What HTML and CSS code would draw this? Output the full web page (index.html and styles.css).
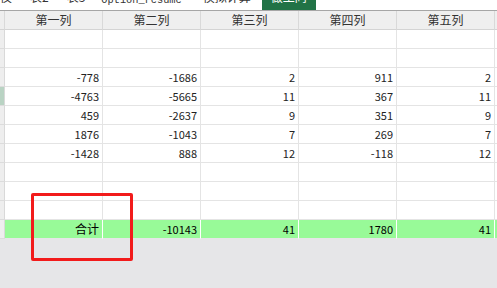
FILE: index.html
```html
<!DOCTYPE html>
<html>
<head>
<meta charset="utf-8">
<link rel="stylesheet" href="styles.css">
</head>
<body>
<div class="page">
  <div class="tabs">
    <div class="tab t1"><span>仪</span></div>
    <div class="tab t2"><span>表2</span></div>
    <div class="tab t3"><span>表3</span></div>
    <div class="tab t4"><span>Option_resume</span></div>
    <div class="tab t5"><span>模拟计算</span></div>
    <div class="tab active"><span>做工同</span></div>
  </div>
  <div class="sheet">
    <div class="row head">
      <div class="rh"></div><div class="c">第一列</div><div class="c">第二列</div><div class="c">第三列</div><div class="c">第四列</div><div class="c">第五列</div><div class="c"></div>
    </div>
    <div class="row"><div class="rh"></div><div class="c"></div><div class="c"></div><div class="c"></div><div class="c"></div><div class="c"></div><div class="c"></div></div>
    <div class="row"><div class="rh"></div><div class="c"></div><div class="c"></div><div class="c"></div><div class="c"></div><div class="c"></div><div class="c"></div></div>
    <div class="row"><div class="rh"></div><div class="c">-778</div><div class="c">-1686</div><div class="c">2</div><div class="c">911</div><div class="c">2</div><div class="c"></div></div>
    <div class="row"><div class="rh sel"></div><div class="c">-4763</div><div class="c">-5665</div><div class="c">11</div><div class="c">367</div><div class="c">11</div><div class="c"></div></div>
    <div class="row"><div class="rh"></div><div class="c">459</div><div class="c">-2637</div><div class="c">9</div><div class="c">351</div><div class="c">9</div><div class="c"></div></div>
    <div class="row"><div class="rh"></div><div class="c">1876</div><div class="c">-1043</div><div class="c">7</div><div class="c">269</div><div class="c">7</div><div class="c"></div></div>
    <div class="row"><div class="rh"></div><div class="c">-1428</div><div class="c">888</div><div class="c">12</div><div class="c">-118</div><div class="c">12</div><div class="c"></div></div>
    <div class="row"><div class="rh"></div><div class="c"></div><div class="c"></div><div class="c"></div><div class="c"></div><div class="c"></div><div class="c"></div></div>
    <div class="row"><div class="rh"></div><div class="c"></div><div class="c"></div><div class="c"></div><div class="c"></div><div class="c"></div><div class="c"></div></div>
    <div class="row"><div class="rh"></div><div class="c"></div><div class="c"></div><div class="c"></div><div class="c"></div><div class="c"></div><div class="c"></div></div>
    <div class="row total"><div class="rh"></div><div class="c cjk">合计</div><div class="c">-10143</div><div class="c">41</div><div class="c">1780</div><div class="c">41</div><div class="c"></div></div>
  </div>
  <div class="mark"></div>
</div>
</body>
</html>
```

FILE: styles.css
```css
* { box-sizing: border-box; }
html, body { margin: 0; padding: 0; }
body {
  width: 497px;
  height: 288px;
  overflow: hidden;
  background: #e6e6e8;
  font-family: "Noto Sans CJK SC", "Liberation Sans", sans-serif;
}
.page { position: relative; width: 497px; height: 288px; }

.tabs {
  display: flex;
  height: 11px;
  overflow: hidden;
  background: #ffffff;
  border-bottom: 1px solid #a6a6a6;
  font-size: 12px;
  color: #333333;
}
.tab {
  height: 10px;
  display: flex;
  align-items: flex-end;
  padding-bottom: 6px;
  white-space: nowrap;
}
.tab span { line-height: 14px; }
.t1 { margin-left: 0; }
.t2 { margin-left: 18px; }
.t3 { margin-left: 18px; }
.t4 {
  margin-left: 16px;
  padding-bottom: 3px;
  font-family: "Liberation Mono", monospace;
  font-size: 10.3px;
}
.t5 { margin-left: 21px; }
.active {
  margin-left: 11px;
  width: 54px;
  justify-content: center;
  background: #217346;
  color: #ffffff;
}

.sheet { background: #ffffff; }
.row {
  display: grid;
  grid-template-columns: 5px 98px 98px 98px 98px 98px 3px;
  height: 19px;
}
.rh {
  background: #eeeeee;
  border-right: 1px solid #d9d9d9;
  border-bottom: 1px solid #dcdcdc;
}
.rh.sel { background: #b9d3c3; }
.c {
  border-right: 1px solid #e4e4e4;
  border-bottom: 1px solid #e4e4e4;
  text-align: right;
  padding-right: 3px;
  font-size: 11px;
  line-height: 18px;
  color: #222222;
  white-space: nowrap;
  overflow: hidden;
}
.head .c {
  background: #efefef;
  border-right: 1px solid #d9d9d9;
  border-bottom: 1px solid #d4d4d4;
  text-align: center;
  padding-right: 0;
  font-size: 12px;
  color: #333333;
}
.head .rh { border-bottom: 1px solid #d4d4d4; }
.total .c {
  background: #98fa98;
  border-right: 1px solid #ffffff;
  border-bottom: 1px solid #e6e6e8;
  color: #000000;
}
.total .cjk { font-size: 12px; }

.mark {
  position: absolute;
  left: 31px;
  top: 193px;
  width: 102px;
  height: 68px;
  border: 3px solid #f21b1b;
  border-radius: 2px;
}
```
